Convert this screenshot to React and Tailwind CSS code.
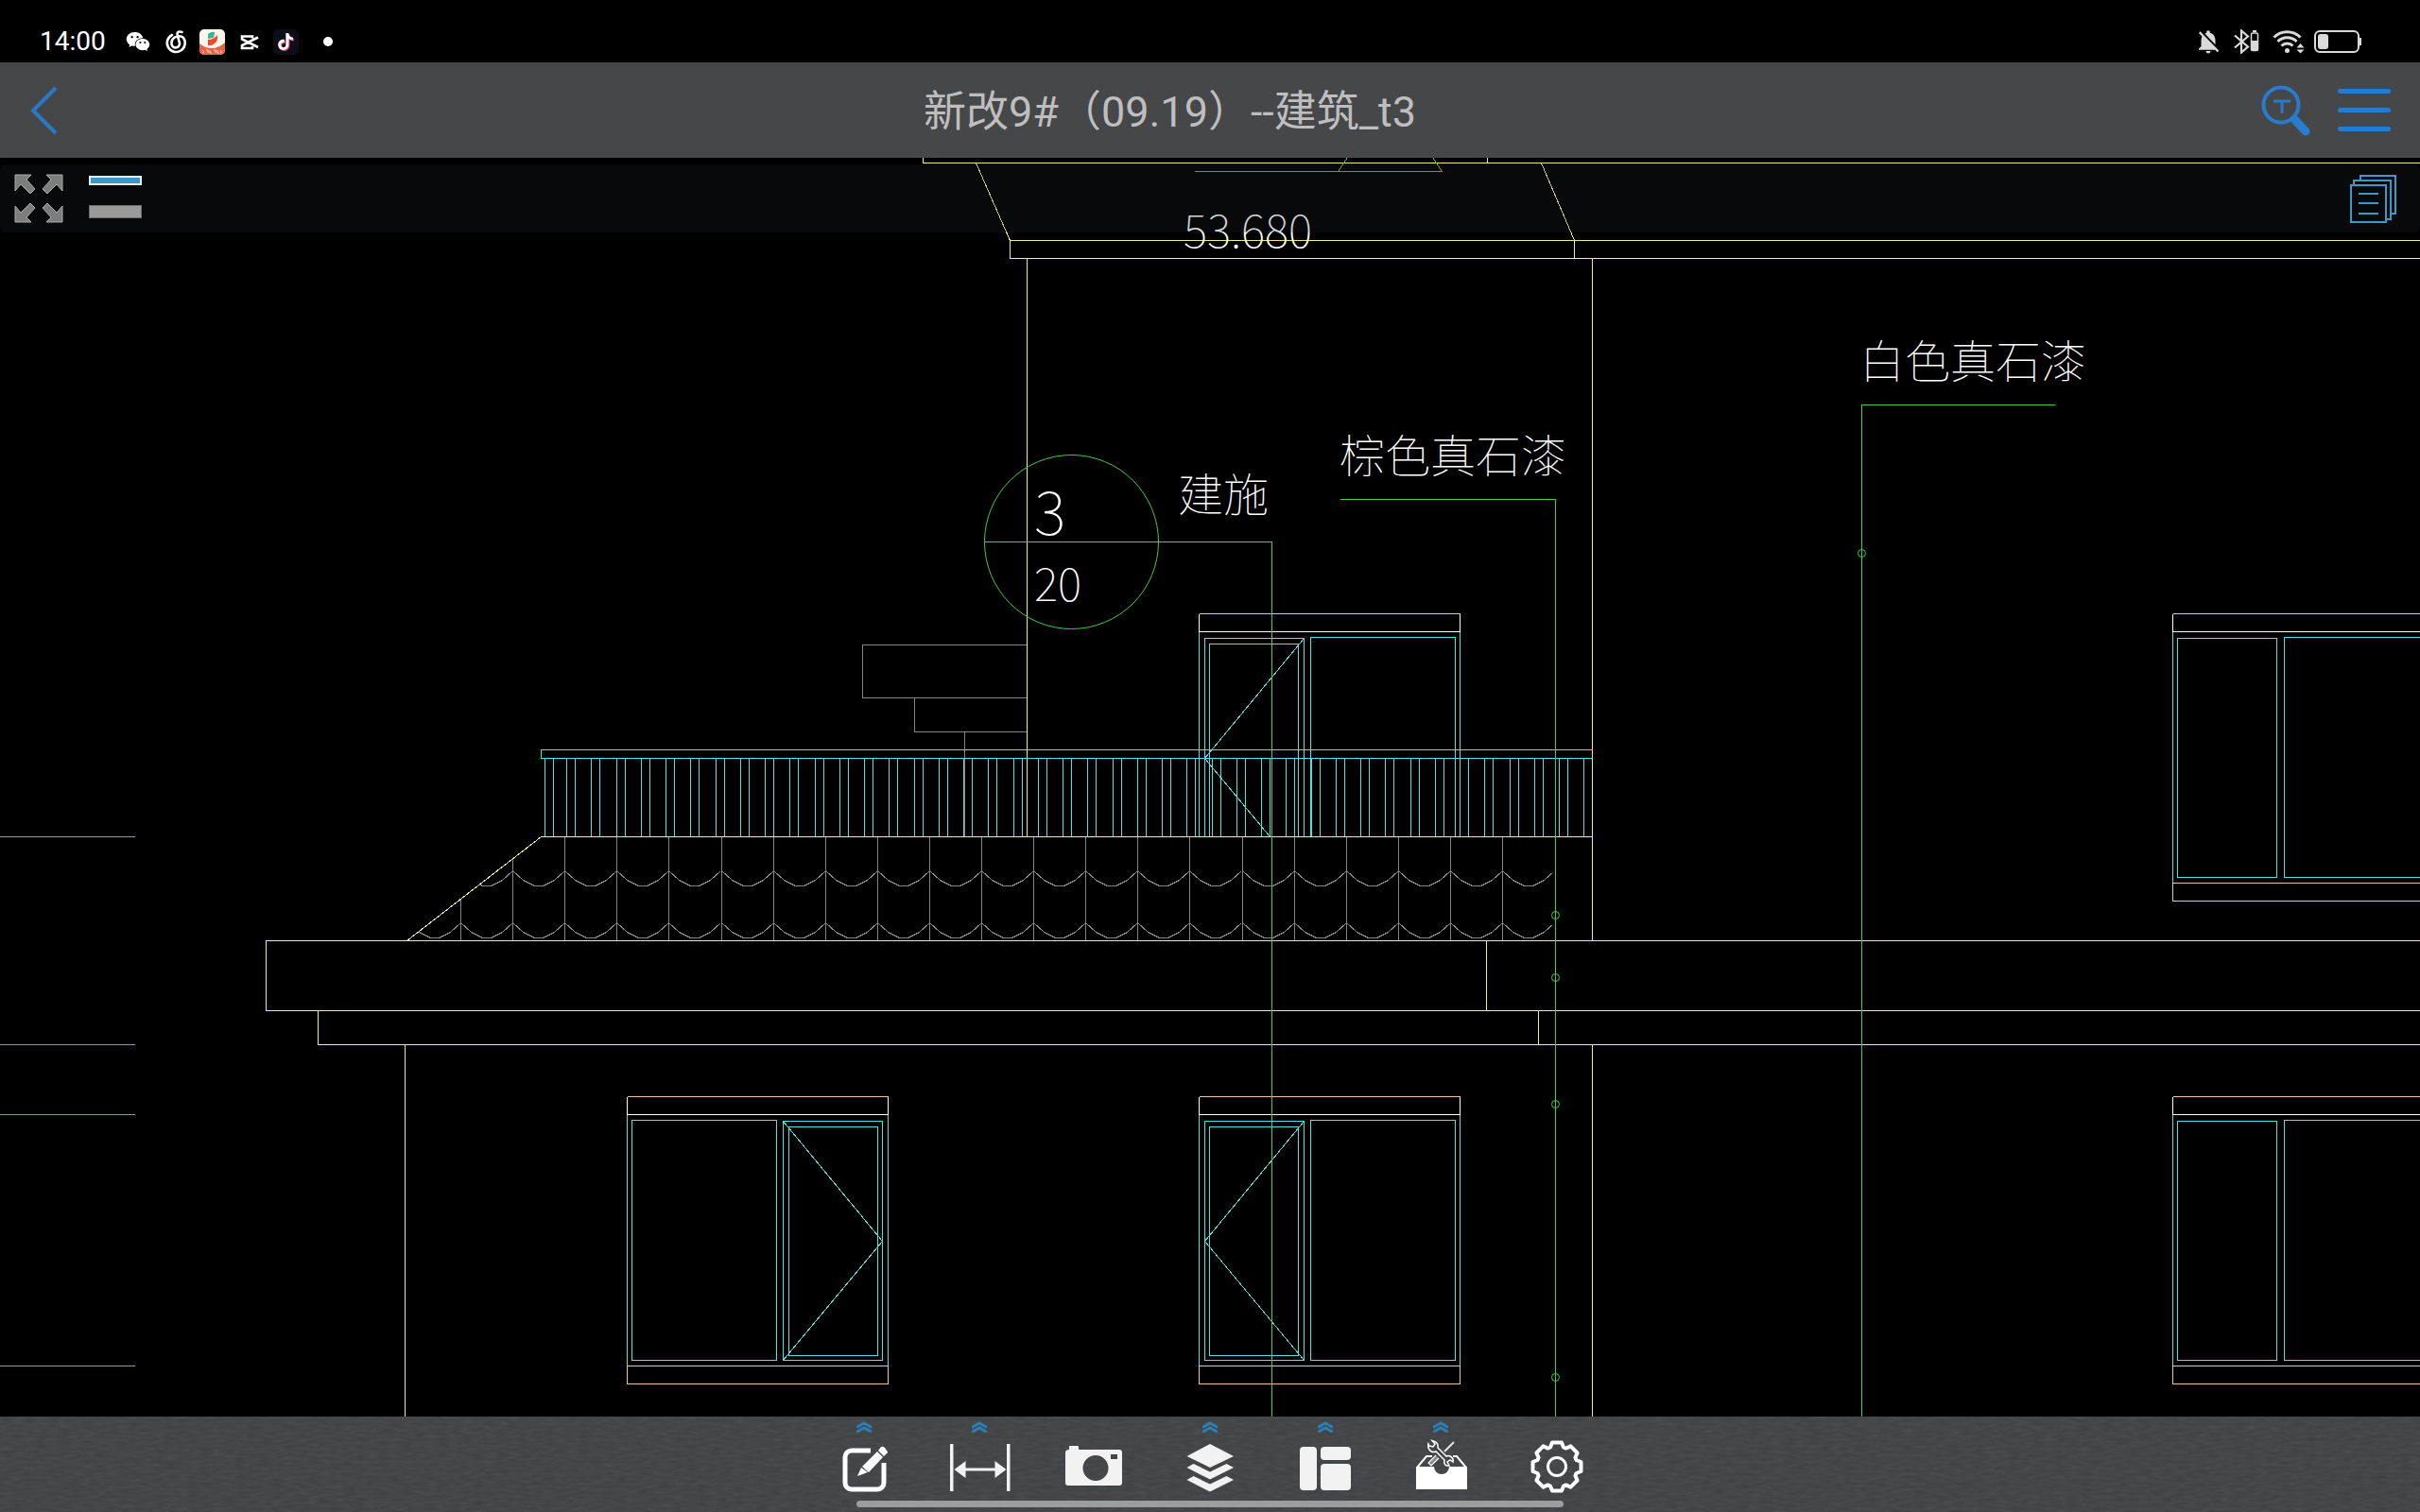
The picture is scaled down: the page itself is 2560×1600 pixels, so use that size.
import React from "react";
import { AiFillWechat } from "react-icons/ai";
import { SiTiktok } from "react-icons/si";
import { MdNotificationsOff } from "react-icons/md";

const YELLOW = "#f3f073";
const CYAN = "#50e2de";
const GREEN = "#41cf44";
const GRAY = "#858585";
const PEACH = "#f0c4a0";
const WHITE = "#ffffff";

/* ---------- status bar ---------- */

function StatusBar() {
  return (
    <div className="flex h-[66px] shrink-0 items-center justify-between bg-black pt-[22px] pr-[62px] pl-[42px]">
      <div className="flex items-center gap-3">
        <time className="mr-2 text-[28px] leading-8 text-white">14:00</time>
        <AiFillWechat className="h-[28px] w-[28px] text-white" />
        <svg viewBox="0 0 27 27" className="h-[27px] w-[27px]" fill="none" stroke="#fff" strokeWidth="2.600" strokeLinecap="round">
          <path d="M10 6A9.500 9.500 0 1 0 22 9Q19.500 6.500 15.500 7.500Q9.500 9 9.500 14.500A4.300 4.300 0 1 0 17.500 13L15.500 5Q15.500 1.500 20.500 3" />
        </svg>
        <svg viewBox="0 0 27 27" className="h-[27px] w-[27px]">
          <rect width="27" height="27" rx="5" fill="#fff7ef" />
          <path d="M0 15Q6 20 13 20T27 14V22a5 5 0 0 1-5 5H5a5 5 0 0 1-5-5Z" fill="#ee6249" />
          <path d="M9 5q4-3 7-2 0 3-1 6l-6 1Z" fill="#35b597" />
          <path d="M9 11q6 0 10-5 1 6-3 9t-7 2Z" fill="#ef4a2c" />
          <path d="M3 22l2 2-2 1M7 22h2v3M11 22v3h2M15 22h2v3M19 22v3h2M22 22l2 2-2 1" fill="none" stroke="#ffd9c8" />
        </svg>
        <svg viewBox="0 0 27 27" className="h-[27px] w-[27px]" fill="none" stroke="#fff" strokeWidth="2.600">
          <path d="M17 9.500V7.500H6v3L23 19M17 18v2H6v-3L23 8.500" />
        </svg>
        <span className="flex h-[27px] w-[27px] items-center justify-center rounded-md bg-[#0d0d17]">
          <SiTiktok className="h-[18px] w-[18px] text-white drop-shadow-[1px_1px_0_#f0315a]" />
        </span>
        <span className="ml-3.5 h-[10px] w-[10px] rounded-full bg-white" />
      </div>
      <div className="flex items-center gap-3 text-[#dadada]">
        <MdNotificationsOff className="h-[30px] w-[30px]" />
        <svg viewBox="0 0 27 26" className="h-[26px] w-[27px]" fill="none" stroke="currentColor">
          <path d="M1 6.500l14 12-7 6V1.500l7 6-14 12" strokeWidth="2.200" />
          <rect x="18.500" y="4" width="7" height="18.500" rx="1.500" strokeWidth="1.500" />
          <path d="M20 2h4" strokeWidth="2" />
          <rect x="18.500" y="12" width="7" height="10.500" fill="currentColor" stroke="none" />
        </svg>
        <svg viewBox="0 0 34 26" className="ml-0.5 h-[26px] w-[34px]" fill="none" stroke="currentColor" strokeWidth="3">
          <path d="M1.500 8.500a20 20 0 0 1 28 0" />
          <path d="M5.500 13a14 14 0 0 1 20 0" />
          <path d="M9.500 17.500a8.500 8.500 0 0 1 12 0" />
          <circle cx="15.500" cy="22.500" r="2.500" fill="currentColor" stroke="none" />
          <path d="M25.500 19.500h8l-4-4.500ZM25.500 21.500h8l-4 4Z" fill="currentColor" stroke="none" />
        </svg>
        <svg viewBox="0 0 50 24" className="-ml-0.5 h-[24px] w-[50px]" fill="none" stroke="currentColor">
          <rect x="1" y="1" width="46" height="22" rx="5" strokeWidth="2" />
          <rect x="4" y="4" width="11" height="16" rx="3" fill="currentColor" stroke="none" />
          <path d="M49 8v8" strokeWidth="2" />
        </svg>
      </div>
    </div>
  );
}

/* ---------- title bar ---------- */

function TitleBar() {
  return (
    <header className="flex h-[101px] shrink-0 items-center bg-[#464749] pr-[31px] pl-[24px]">
      <button type="button" aria-label="返回" className="flex h-[60px] w-[44px] items-center justify-center">
        <svg viewBox="0 0 44 60" className="h-[60px] w-[44px]" fill="none" stroke="#2b79c6" strokeWidth="4">
          <path d="M35 6L11 30l24 24" />
        </svg>
      </button>
      <h1 className="flex-1 pt-1 pl-4 text-center text-[45px] leading-[60px] text-[#bebebe]">新改9#（09.19）--建筑_t3</h1>
      <div className="flex items-center justify-end gap-[28px]">
        <button type="button" aria-label="查找文字">
          <svg viewBox="0 0 54 54" className="h-[54px] w-[54px]" fill="none" stroke="#297bd0">
            <circle cx="22" cy="21" r="18.500" strokeWidth="4" />
            <path d="M36 36L48 49" strokeWidth="9" strokeLinecap="round" />
            <path d="M14 17H32M23 17V30" strokeWidth="3" />
          </svg>
        </button>
        <button type="button" aria-label="菜单" className="flex w-[56px] flex-col gap-[15px]">
          <span className="h-[5px] rounded-sm bg-[#297bd0]" />
          <span className="h-[5px] rounded-sm bg-[#297bd0]" />
          <span className="h-[5px] rounded-sm bg-[#297bd0]" />
        </button>
      </div>
    </header>
  );
}

/* ---------- drawing ---------- */

function Lines({ color, d }) {
  return <path d={d} fill="none" stroke={color} strokeWidth="1" />;
}

const box = (x1, y1, x2, y2) => `M${x1} ${y1}H${x2}V${y2}H${x1}Z`;

function WindowHead({ x1, x2, y }) {
  return (
    <g>
      <Lines color={WHITE} d={`M${x1} ${y}V${y + 19}H${x2}V${y}`} />
      <Lines color={PEACH} d={`M${x1} ${y}H${x2}`} />
    </g>
  );
}

function WindowSill({ x1, x2, y }) {
  return <Lines color={PEACH} d={box(x1, y, x2, y + 19)} />;
}

function CasementWindow({ x, y, mirrored = false }) {
  const fx = (v) => (mirrored ? x + 276 - v : x + v);
  return (
    <g>
      <Lines color={CYAN} d={`M${x} ${y + 19}V${y + 285}M${x + 276} ${y + 19}V${y + 285}`} />
      <Lines color={CYAN} d={box(fx(6), y + 26, fx(111), y + 279)} />
      <Lines color={CYAN} d={box(fx(11), y + 32, fx(105), y + 274)} />
      <Lines color={CYAN} d={box(fx(118), y + 25, fx(271), y + 279)} />
      <Lines color={CYAN} d={`M${fx(111)} ${y + 26}L${fx(6)} ${y + 153}L${fx(111)} ${y + 279}`} />
      <WindowHead x1={x} x2={x + 276} y={y} />
      <WindowSill x1={x} x2={x + 276} y={y + 285} />
    </g>
  );
}

function EdgeWindow({ y }) {
  return (
    <g>
      <Lines color={CYAN} d={`M2298 ${y + 19}V${y + 285}`} />
      <Lines color={CYAN} d={box(2303, y + 26, 2408, y + 279)} />
      <Lines color={CYAN} d={box(2416, y + 25, 2600, y + 279)} />
      <WindowHead x1={2298} x2={2600} y={y} />
      <WindowSill x1={2298} x2={2600} y={y + 285} />
    </g>
  );
}

const balusters = ["M576 802V885M585 802V885"]
  .concat(
    Array.from({ length: 42 }, (_, i) => {
      const a = Math.round(599 + i * 26.25);
      const b = a + 9;
      return b < 1684 ? `M${a} 802V885M${b} 802V885` : `M${a} 802V885`;
    })
  )
  .join("");

const tileX = Array.from({ length: 21 }, (_, i) => Math.round(487 + i * 55.1));
const tileJoints = tileX.map((x) => `M${x} 885V995`).join("");
const scallops = [921, 976]
  .map((y) =>
    [432, ...tileX]
      .map((x) => `M${x} ${y}L${x + 11} ${y + 10}L${x + 23} ${y + 16}H${x + 32}L${x + 44} ${y + 10}L${x + 55} ${y}`)
      .join("")
  )
  .join("");

function Elevation() {
  return (
    <svg
      viewBox="0 167 2560 1332"
      preserveAspectRatio="xMidYMin slice"
      className="block h-full w-full"
      role="img"
      aria-label="建筑立面图"
    >
      <clipPath id="roof">
        <path d="M572 885H1642V995H430Z" />
      </clipPath>
      <g shapeRendering="crispEdges" transform="translate(.5 .5)">
        <g clipPath="url(#roof)">
          <Lines color={GRAY} d={tileJoints} />
          <Lines color={GRAY} d={scallops} />
        </g>
        <Lines color={GRAY} d="M1086 682H912V738H1086M967 738V774H1086M1020 774V885" />

        <Lines
          color={YELLOW}
          d="M976 160V172H2560M1573 160V172M1032 172L1068 254M1630 172L1665 254M2560 254H1068V273H2560M1665 254V273M1086 273V885M1684 273V995M1684 1105V1499"
        />

        <g>
          <Lines color={CYAN} d="M1268 668V885M1544 668V885" />
          <Lines color={CYAN} d="M1274 885V675H1379V885M1279 885V681H1373V885M1386 885V674H1539V885" />
          <Lines color={CYAN} d="M1379 675L1274 802L1343 885" />
          <WindowHead x1={1268} x2={1544} y={649} />
        </g>

        <Lines color={CYAN} d="M1684 793H572V802H1684" />
        <Lines color={CYAN} d={balusters} />
        <Lines
          color={YELLOW}
          d="M1684 885H572L430 995M2560 995H281V1069H2560M336 1069V1105H2560M1572 995V1069M1627 1069V1105M428 1105V1499"
        />

        <CasementWindow x={663} y={1160} mirrored />
        <CasementWindow x={1268} y={1160} />
        <EdgeWindow y={649} />
        <EdgeWindow y={1160} />

        <Lines color={GREEN} d="M-1 885H142M-1 1105H142M-1 1179H142M-1 1445H142" />
        <Lines color={GREEN} d="M1263 181H1525L1511 160M1415 181L1429 160" />
        <Lines color={GREEN} d="M1041 573H1345V1499M1417 528H1645V1499M2173 428H1969V1499" />
        <g fill="none" stroke={GREEN} shapeRendering="geometricPrecision">
          <circle cx="1133" cy="573" r="92" />
          <circle cx="1969" cy="585" r="4" />
          <circle cx="1645" cy="968" r="4" />
          <circle cx="1645" cy="1034" r="4" />
          <circle cx="1645" cy="1168" r="4" />
          <circle cx="1645" cy="1457" r="4" />
        </g>
      </g>

      <g fill="#fff" fontFamily="'Noto Sans CJK SC', sans-serif" fontWeight="100">
        <text x="1252" y="262" fontSize="48">53.680</text>
        <text x="1967" y="400" fontSize="48">白色真石漆</text>
        <text x="1417" y="500" fontSize="48">棕色真石漆</text>
        <text x="1246" y="541" fontSize="48">建施</text>
        <text x="1094" y="566" fontSize="64">3</text>
        <text x="1094" y="636" fontSize="48">20</text>
      </g>
    </svg>
  );
}

/* ---------- floating strip over the drawing ---------- */

function ExpandIcon() {
  const arrow = "M1 1H18L13 6L22 16L17 21L7 11L1 18Z";
  return (
    <svg viewBox="0 0 52 52" className="h-[52px] w-[52px]" fill="#7d7d7d" stroke="#ababab" strokeWidth="1">
      <path d={arrow} />
      <path d={arrow} transform="matrix(-1 0 0 1 52 0)" />
      <path d={arrow} transform="matrix(1 0 0 -1 0 52)" />
      <path d={arrow} transform="matrix(-1 0 0 -1 52 52)" />
    </svg>
  );
}

function ViewStrip() {
  return (
    <div className="absolute inset-x-0 top-[7px] flex h-[72px] items-center justify-between rounded-md bg-[#232d37]/20 pr-[24px] pl-[15px]">
      <div className="flex items-center gap-[27px]">
        <button type="button" aria-label="全屏">
          <ExpandIcon />
        </button>
        <button type="button" aria-label="切换工具栏" className="flex w-[56px] flex-col gap-[21px] pb-1">
          <span className="h-[10px] border-2 border-[#e4f4fb] bg-[#3a97c9]" />
          <span className="h-[14px] border border-[#6f6f6f] bg-[#9a9a9a]" />
        </button>
      </div>
      <button type="button" aria-label="图纸列表">
        <svg viewBox="0 0 52 54" className="h-[54px] w-[52px]" fill="none" stroke="#3d9ac8" strokeWidth="2">
          <path d="M3 13H40V52H3Z" />
          <path d="M6 12V8H45V49H41" />
          <path d="M13 7V3H50V43H46" />
          <path d="M11 22H32M11 32H32M11 43H32" />
        </svg>
      </button>
    </div>
  );
}

/* ---------- bottom toolbar ---------- */

const gearPath = (() => {
  const pts = [];
  for (let k = 0; k < 8; k++) {
    const a = (k * Math.PI) / 4;
    [[20.5, -7], [25.5, -5], [25.5, 5], [20.5, 7]].forEach(([r, t]) => {
      const x = 33 + r * Math.sin(a) + t * Math.cos(a);
      const y = 29 - r * Math.cos(a) + t * Math.sin(a);
      pts.push(`${x.toFixed(1)} ${y.toFixed(1)}`);
    });
  }
  return `M${pts.join("L")}Z`;
})();

const tools = [
  {
    label: "编辑",
    more: true,
    icon: (
      <g>
        <path
          d="M39 12H19a7 7 0 0 0-7 7V46a7 7 0 0 0 7 7H46a7 7 0 0 0 7-7V25"
          fill="none"
          stroke="#fff"
          strokeWidth="5"
        />
        <path d="M25 39L29 30L36 35ZM30 29L46 13L52 19L37 35ZM47 12L50 8Q52 7 54 9L56 12Q58 14 56 15L53 18Z" fill="#fff" />
      </g>
    ),
  },
  {
    label: "测量",
    more: true,
    icon: (
      <g fill="#f2f2f2">
        <path d="M1 5H4.500V55H1ZM61 5H64.500V55H61Z" />
        <path d="M5.500 32L17.500 23V30.500H48.500V23L60.500 32L48.500 41V33.500H17.500V41Z" />
      </g>
    ),
  },
  {
    label: "拍照",
    more: false,
    icon: (
      <path
        fillRule="evenodd"
        fill="#f2f2f2"
        d="M5 8Q5 7 6 7H14Q15 7 15 8V11H58Q61 11 61 14V46Q61 49 58 49H4Q1 49 1 46V14Q1 11 5 11ZM33 17A13.500 13.500 0 1 0 33 44A13.500 13.500 0 1 0 33 17ZM49 16V21H56V16Z"
      />
    ),
  },
  {
    label: "图层",
    more: true,
    icon: (
      <g fill="#f2f2f2">
        <path d="M32 5L57 18L32 30L7.500 18Z" />
        <path d="M14.500 26L32 34.500L49.500 26L57 30L32 42.500L7.500 30Z" />
        <path d="M14.500 39L32 47.500L49.500 39L57 43L32 55.500L7.500 43Z" />
      </g>
    ),
  },
  {
    label: "布局",
    more: true,
    icon: (
      <g fill="#f2f2f2">
        <rect x="5" y="8" width="18" height="46" rx="4" />
        <rect x="27" y="8" width="32" height="14" rx="4" />
        <rect x="27" y="26" width="32" height="28" rx="4" />
      </g>
    ),
  },
  {
    label: "工具箱",
    more: true,
    icon: (
      <g>
        <path d="M6 29H25a8 8 0 0 0 16 0H60V53H6Z" fill="#fff" />
        <path d="M7 30L17 18H23M59 30L49 18H45" fill="none" stroke="#fff" strokeWidth="2" />
        <path d="M45 4L36 13M44 5L46 3" fill="none" stroke="#e6e6e6" strokeWidth="2" />
        <path d="M27 17L19 25L22 28L30 20" fill="#8a8a8a" stroke="#fff" strokeWidth="1.200" />
        <path
          d="M23 1.500L26 5L24 8L20 7L19 5Q18 10 22 13Q25 14 27 13L36 22Q35 26 38 28L41 28L39 24L42 22L45 24Q46 20 42 18Q40 17 38 18L29 9Q30 3 23 1.500Z"
          fill="#434446"
          stroke="#fff"
          strokeWidth="1.500"
        />
      </g>
    ),
  },
  {
    label: "设置",
    more: false,
    icon: (
      <g fill="none" stroke="#fff" strokeLinejoin="round">
        <path d={gearPath} strokeWidth="4" />
        <circle cx="33" cy="29" r="9.500" strokeWidth="3" />
      </g>
    ),
  },
];

function ToolButton({ label, more, icon }) {
  return (
    <button type="button" aria-label={label} className="flex w-[122px] flex-col items-center gap-[7px] pt-[5px]">
      <svg viewBox="0 0 16 12" className="h-[12px] w-[16px]" fill="none" stroke="#2a80b5" strokeWidth="3">
        {more && <path d="M0 6.500L8 2L16 6.500M0 11.500L8 7L16 11.500" />}
      </svg>
      <svg viewBox="0 0 64 60" className="h-[60px] w-[64px] overflow-visible">
        {icon}
      </svg>
    </button>
  );
}

function Toolbar() {
  return (
    <footer className="relative h-[101px] shrink-0 bg-[#3f4042]">
      <svg className="absolute inset-0 h-full w-full opacity-10" aria-hidden="true">
        <filter id="grain" x="0" y="0" width="100%" height="100%">
          <feTurbulence type="fractalNoise" baseFrequency="0.08 0.3" numOctaves="3" />
          <feColorMatrix type="saturate" values="0" />
        </filter>
        <rect width="100%" height="100%" filter="url(#grain)" />
      </svg>
      <nav className="relative flex h-full items-start justify-center">
        {tools.map((t) => (
          <ToolButton key={t.label} {...t} />
        ))}
      </nav>
      <div className="absolute inset-x-0 bottom-[5px] flex justify-center">
        <span className="h-[7px] w-[748px] rounded-full bg-[#9c9d9d]" />
      </div>
    </footer>
  );
}

export default function App() {
  return (
    <div className="flex h-screen flex-col overflow-hidden bg-black font-['Roboto','Noto_Sans_CJK_SC',sans-serif]">
      <StatusBar />
      <TitleBar />
      <main className="relative min-h-0 flex-1 overflow-hidden">
        <Elevation />
        <ViewStrip />
      </main>
      <Toolbar />
    </div>
  );
}
